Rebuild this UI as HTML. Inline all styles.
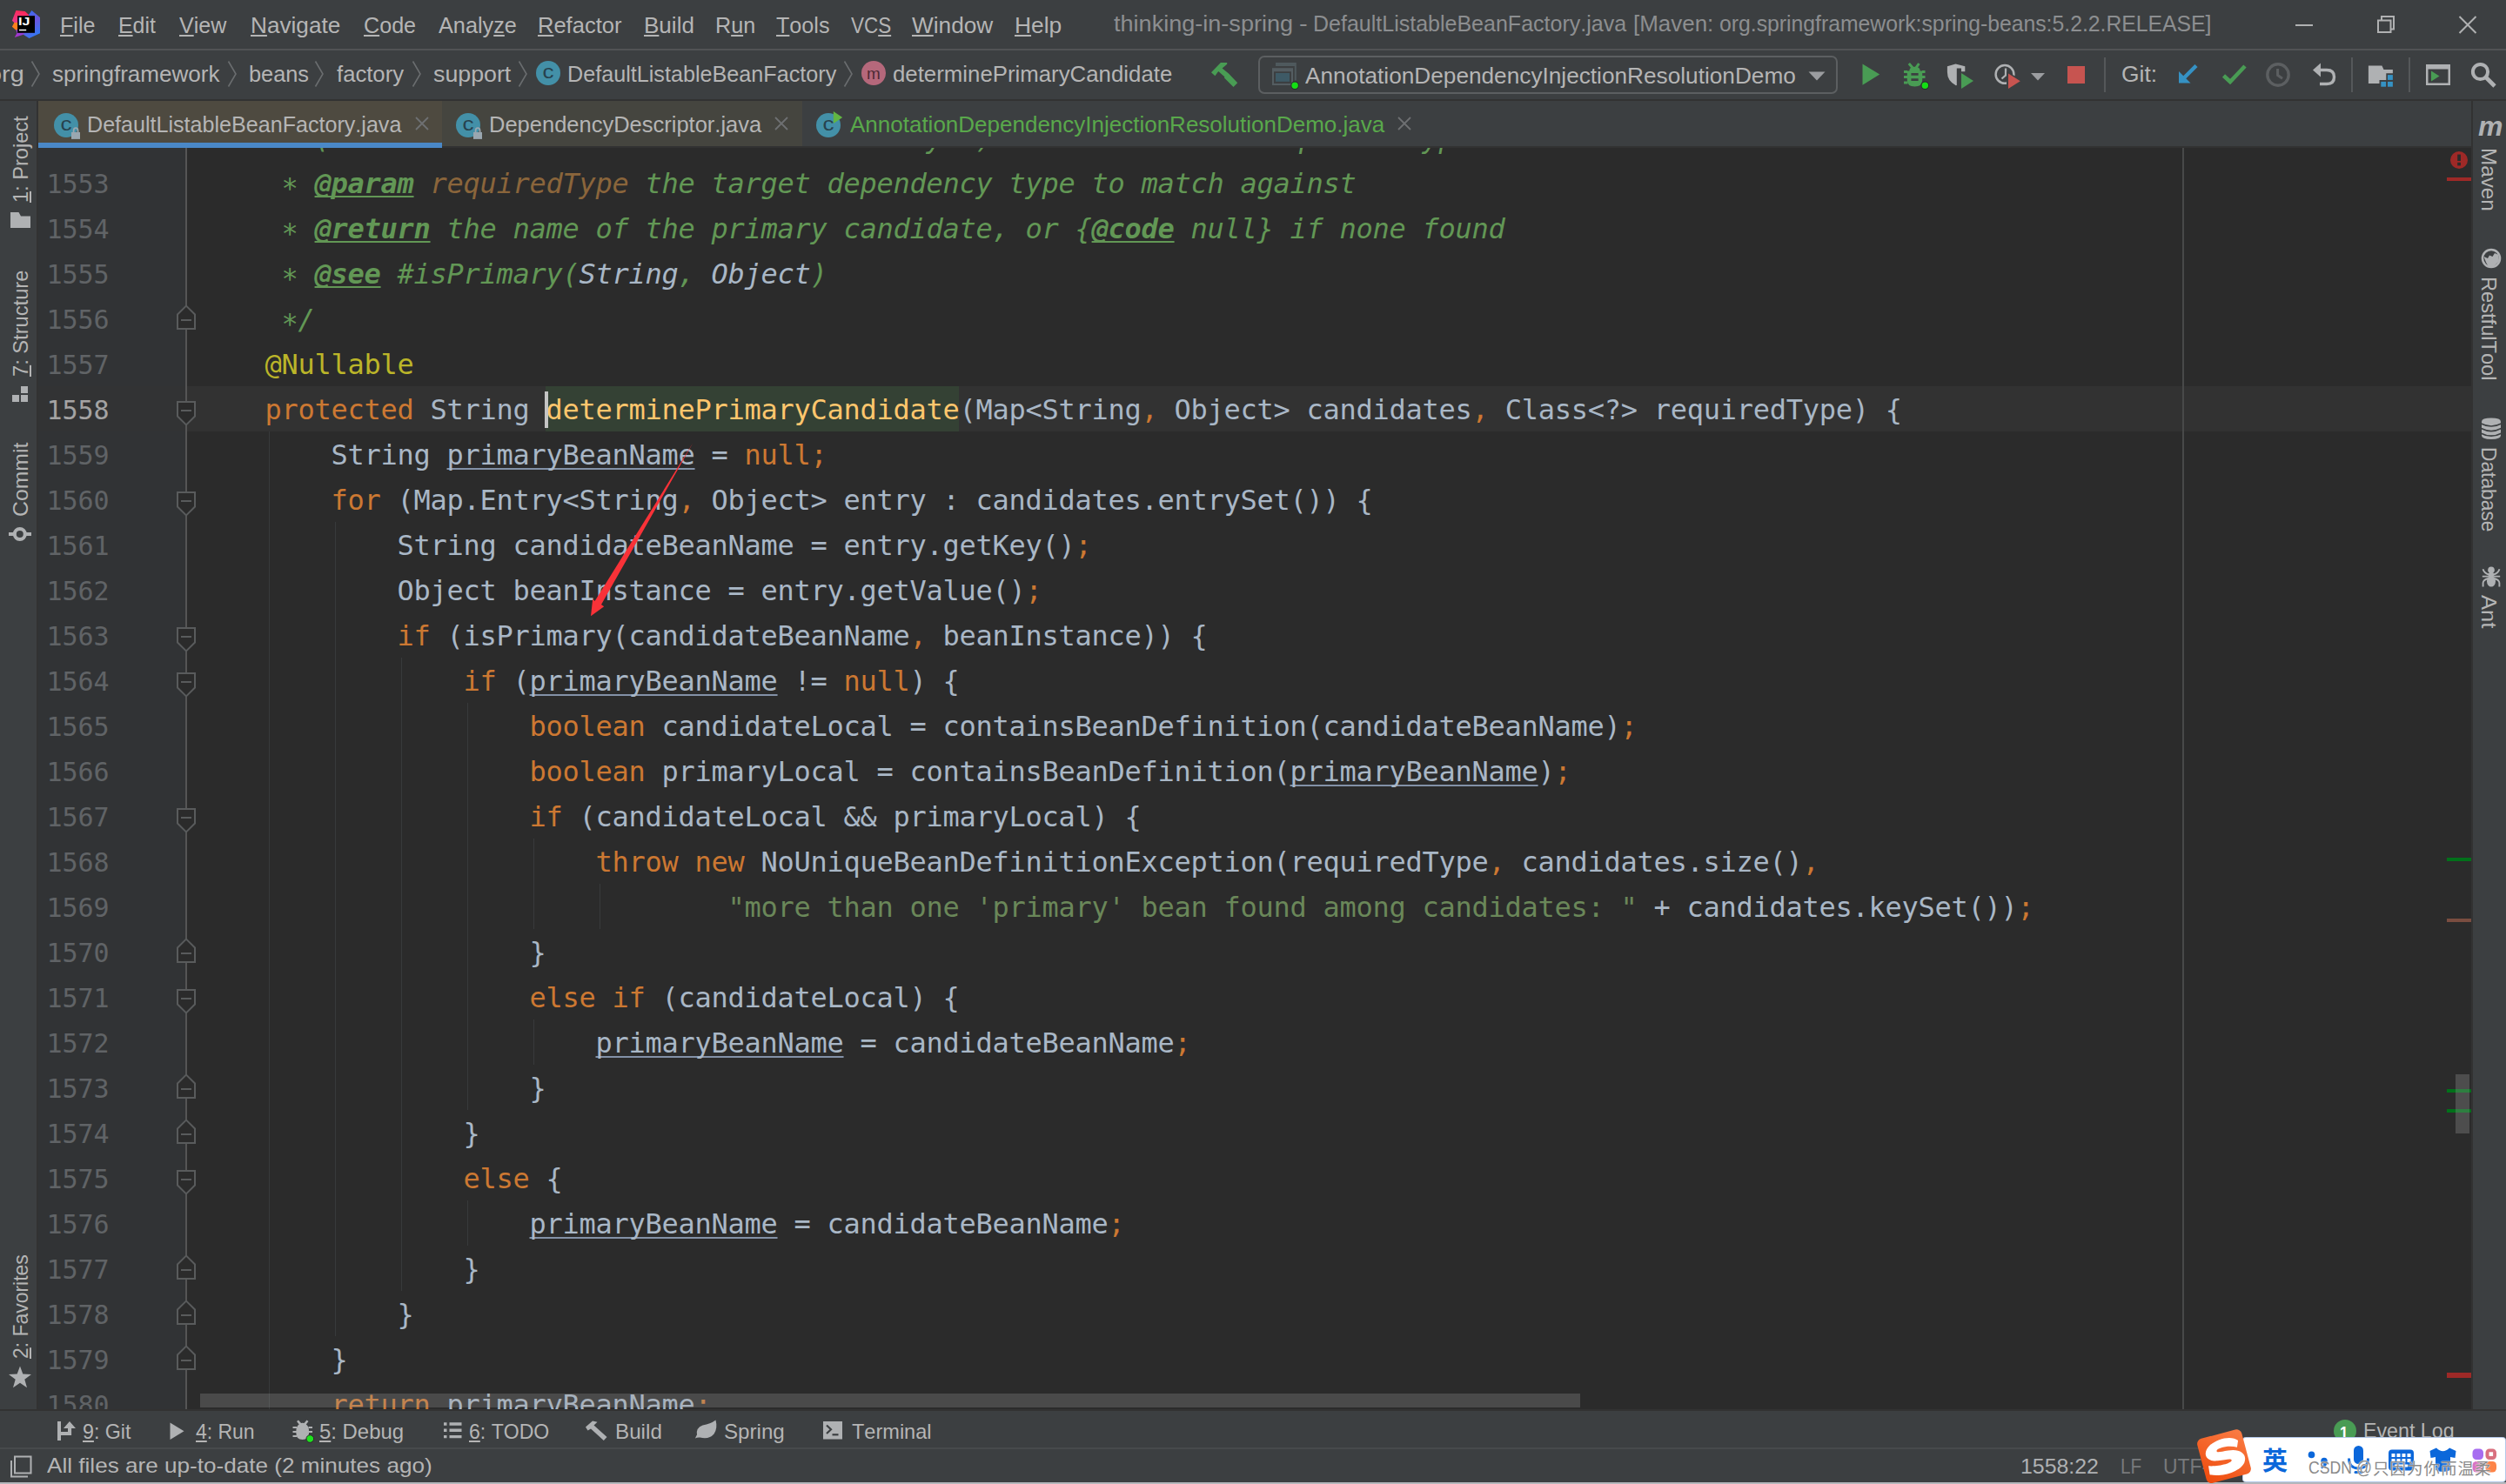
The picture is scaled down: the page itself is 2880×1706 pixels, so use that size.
<!DOCTYPE html>
<html><head><meta charset="utf-8"><title>thinking-in-spring - DefaultListableBeanFactory.java</title>
<style>
html,body{margin:0;padding:0}
html,body{width:2880px;height:1706px;background:#3c3f41}
#root{position:relative;width:2880px;height:1706px;overflow:hidden;background:#3c3f41;font-family:"Liberation Sans",sans-serif;font-kerning:none}
.t{position:absolute;white-space:pre;line-height:1em;font-family:"Liberation Sans",sans-serif;transform-origin:0 0}
.t u{text-decoration:underline;text-decoration-thickness:2px;text-underline-offset:2.2px}
#ed{position:absolute;left:44px;top:170px;width:2796px;height:1450px;background:#2b2b2b;overflow:hidden}
.ln{position:absolute;left:184.5px;height:52px;line-height:52px;white-space:pre;font-family:"DejaVu Sans Mono","Liberation Mono",monospace;font-size:32px;letter-spacing:-0.2656px;color:#a9b7c6}
.num{position:absolute;left:9.5px;height:52px;line-height:52px;white-space:pre;font-family:"DejaVu Sans Mono","Liberation Mono",monospace;font-size:30px;letter-spacing:-0.061px;color:#606366}
.k{color:#cc7832}.m{color:#ffc66d}.a{color:#bbb529}.s{color:#6a8759}
.d{color:#629755;font-style:italic}.dt{color:#629755;font-style:italic;font-weight:bold;text-decoration:underline;text-decoration-thickness:2px;text-underline-offset:2.6px;text-decoration-skip-ink:none}
.ast{position:relative;top:5px}.dp{color:#8a653b;font-style:italic}.dl{color:#a9b7c6;font-style:italic}
.v{text-decoration:underline;text-decoration-color:#8391a7;text-decoration-thickness:2px;text-underline-offset:3.5px;text-decoration-skip-ink:none}
</style></head><body><div id="root">
<div style="position:absolute;left:0px;top:56px;width:2880px;height:2px;background:#515355;"></div>
<div style="position:absolute;left:0px;top:114px;width:2880px;height:2px;background:#323232;"></div>
<div style="position:absolute;left:44px;top:168px;width:2796px;height:2px;background:#323232;"></div>
<div style="position:absolute;left:42px;top:116px;width:2px;height:1504px;background:#323232;"></div>
<div style="position:absolute;left:2840px;top:116px;width:2px;height:1504px;background:#323232;"></div>
<div style="position:absolute;left:0px;top:1620px;width:2880px;height:2px;background:#323232;"></div>
<div style="position:absolute;left:0px;top:1664px;width:2880px;height:1.6px;background:#474a4c;"></div>
<div style="position:absolute;left:0px;top:1704px;width:2880px;height:2px;background:#b4b7bb;"></div>
<div class="t " style="left:69.14px;top:16.29px;font-size:26px;transform:scaleX(0.9636);color:#b5b5b5;"><u>F</u>ile</div>
<div class="t " style="left:136.16px;top:16.29px;font-size:26px;transform:scaleX(0.9558);color:#b5b5b5;"><u>E</u>dit</div>
<div class="t " style="left:206.19px;top:16.29px;font-size:26px;transform:scaleX(0.9626);color:#b5b5b5;"><u>V</u>iew</div>
<div class="t " style="left:288.05px;top:16.29px;font-size:26px;transform:scaleX(1.0068);color:#b5b5b5;"><u>N</u>avigate</div>
<div class="t " style="left:418.02px;top:16.29px;font-size:26px;transform:scaleX(0.9668);color:#b5b5b5;"><u>C</u>ode</div>
<div class="t " style="left:504.25px;top:16.29px;font-size:26px;transform:scaleX(0.9716);color:#b5b5b5;">Analy<u>z</u>e</div>
<div class="t " style="left:617.81px;top:16.29px;font-size:26px;transform:scaleX(0.9812);color:#b5b5b5;"><u>R</u>efactor</div>
<div class="t " style="left:739.66px;top:16.29px;font-size:26px;transform:scaleX(1.0017);color:#b5b5b5;"><u>B</u>uild</div>
<div class="t " style="left:821.84px;top:16.29px;font-size:26px;transform:scaleX(0.9664);color:#b5b5b5;">R<u>u</u>n</div>
<div class="t " style="left:891.84px;top:16.29px;font-size:26px;transform:scaleX(0.9669);color:#b5b5b5;"><u>T</u>ools</div>
<div class="t " style="left:978.30px;top:16.29px;font-size:26px;transform:scaleX(0.8629);color:#b5b5b5;">VC<u>S</u></div>
<div class="t " style="left:1048.08px;top:16.29px;font-size:26px;transform:scaleX(1.0084);color:#b5b5b5;"><u>W</u>indow</div>
<div class="t " style="left:1166.24px;top:16.29px;font-size:26px;transform:scaleX(1.0150);color:#b5b5b5;"><u>H</u>elp</div>
<div class="t " style="left:1279.89px;top:13.79px;font-size:26px;transform:scaleX(1.0408);color:#8c8e90;">thinking-in-spring</div>
<div class="t " style="left:1492.91px;top:13.79px;font-size:26px;transform:scaleX(1.1185);color:#8c8e90;">-</div>
<div class="t " style="left:1508.95px;top:13.79px;font-size:26px;transform:scaleX(0.9619);color:#8c8e90;">DefaultListableBeanFactory.java</div>
<div class="t " style="left:1877.35px;top:13.79px;font-size:26px;transform:scaleX(0.9982);color:#8c8e90;">[Maven:</div>
<div class="t " style="left:1975.66px;top:13.79px;font-size:26px;transform:scaleX(0.9521);color:#8c8e90;">org.springframework:spring-beans:5.2.2.RELEASE]</div>
<svg style="position:absolute;left:13px;top:11px;" width="34" height="34" viewBox="0 0 34 34"><defs><linearGradient id="lgb" x1="0.3" y1="0" x2="0.7" y2="1"><stop offset="0" stop-color="#336ff0"/><stop offset=".45" stop-color="#6b55dd"/><stop offset="1" stop-color="#2b7cf6"/></linearGradient>
<linearGradient id="lgp" x1="0.6" y1="0" x2="0.2" y2="1"><stop offset="0" stop-color="#fe2857"/><stop offset="1" stop-color="#e63a8c"/></linearGradient>
<linearGradient id="lgm" x1="0" y1="1" x2="1" y2="0"><stop offset="0" stop-color="#b030c8"/><stop offset="1" stop-color="#7a4be0"/></linearGradient></defs>
<path d="M5.4 1 L15.7 1.9 L20 6 V8 H8 V15.1 H3.3 L0.9 12.7 Z" fill="url(#lgp)"/>
<path d="M3.3 15.1 H8 V22.5 L5.4 23.7 L0.9 19.7 Z" fill="#fc801d"/>
<path d="M20 6 L23.4 1 L33 9.1 V27.3 L20.5 33 L13.8 28.8 V26 H26 V8 H20 Z" fill="url(#lgb)"/>
<path d="M5.4 23.7 L8 22 V26 H15.7 L13.8 28.8 L3.8 31.9 L6.6 26.8 Z" fill="url(#lgm)"/>
<rect x="7.1" y="7.2" width="19.9" height="19.6" fill="#000"/>
<rect x="9" y="22.8" width="8.2" height="1.5" fill="#fff"/></svg>
<div class="t " style="left:20.82px;top:18.00px;font-size:13px;transform:scaleX(1.2440);color:#fff;font-weight:bold;">IJ</div>
<div style="position:absolute;left:2638px;top:28px;width:20px;height:2px;background:#b0b1b2;"></div>
<svg style="position:absolute;left:2730px;top:16px;" width="24" height="24" viewBox="0 0 24 24"><path d="M3 7.5 H17.5 V21 H3 Z M7 7 V3 H21 V17.5 H18" fill="none" stroke="#b0b1b2" stroke-width="2"/></svg>
<svg style="position:absolute;left:2824px;top:16px;" width="24" height="24" viewBox="0 0 24 24"><path d="M2.5 3 L21.5 22 M21.5 3 L2.5 22" fill="none" stroke="#b0b1b2" stroke-width="2"/></svg>
<div class="t " style="left:-13.81px;top:71.99px;font-size:26px;transform:scaleX(1.1089);color:#b5b5b5;">org</div>
<svg style="position:absolute;left:35px;top:69px;" width="12" height="32" viewBox="0 0 12 32"><path d="M1.5 1.5 L10 16 L1.5 30.5" fill="none" stroke="#6a6d6f" stroke-width="1.6"/></svg>
<svg style="position:absolute;left:261px;top:69px;" width="12" height="32" viewBox="0 0 12 32"><path d="M1.5 1.5 L10 16 L1.5 30.5" fill="none" stroke="#6a6d6f" stroke-width="1.6"/></svg>
<svg style="position:absolute;left:361px;top:69px;" width="12" height="32" viewBox="0 0 12 32"><path d="M1.5 1.5 L10 16 L1.5 30.5" fill="none" stroke="#6a6d6f" stroke-width="1.6"/></svg>
<svg style="position:absolute;left:473px;top:69px;" width="12" height="32" viewBox="0 0 12 32"><path d="M1.5 1.5 L10 16 L1.5 30.5" fill="none" stroke="#6a6d6f" stroke-width="1.6"/></svg>
<svg style="position:absolute;left:594.6px;top:69px;" width="12" height="32" viewBox="0 0 12 32"><path d="M1.5 1.5 L10 16 L1.5 30.5" fill="none" stroke="#6a6d6f" stroke-width="1.6"/></svg>
<svg style="position:absolute;left:969.4px;top:69px;" width="12" height="32" viewBox="0 0 12 32"><path d="M1.5 1.5 L10 16 L1.5 30.5" fill="none" stroke="#6a6d6f" stroke-width="1.6"/></svg>
<div class="t " style="left:59.78px;top:71.99px;font-size:26px;transform:scaleX(1.0017);color:#b5b5b5;">springframework</div>
<div class="t " style="left:285.67px;top:71.99px;font-size:26px;transform:scaleX(0.9733);color:#b5b5b5;">beans</div>
<div class="t " style="left:386.54px;top:71.99px;font-size:26px;transform:scaleX(0.9870);color:#b5b5b5;">factory</div>
<div class="t " style="left:497.76px;top:71.99px;font-size:26px;transform:scaleX(1.0290);color:#b5b5b5;">support</div>
<div style="position:absolute;left:615.9px;top:70.3px;width:28px;height:28px;border-radius:50%;background:#4390a8"></div>
<div class="t" style="left:615.9px;top:69.2px;width:28px;text-align:center;font-size:22.5px;color:#27424e;line-height:28px;transform:scaleX(1.16);transform-origin:50% 50%">c</div>
<div class="t " style="left:652.14px;top:71.99px;font-size:26px;transform:scaleX(0.9681);color:#b5b5b5;">DefaultListableBeanFactory</div>
<div style="position:absolute;left:990px;top:70.3px;width:28px;height:28px;border-radius:50%;background:#b5687b"></div>
<div class="t" style="left:990px;top:70.6px;width:28px;text-align:center;font-size:18px;color:#4d2a35;line-height:28px;transform:scaleX(1.05);transform-origin:50% 50%">m</div>
<div class="t " style="left:1025.92px;top:71.99px;font-size:26px;transform:scaleX(0.9924);color:#b5b5b5;">determinePrimaryCandidate</div>
<svg style="position:absolute;left:1392px;top:71px;" width="32" height="30" viewBox="0 0 32 30"><path d="M0 12.2 L10.9 1 H18.2 V2.7 L12.6 7.4 L20 13.6 L30.2 24.2 L25.5 29 L15 18.6 L15.3 17.3 L8.2 11 L4.4 16.2 Z" fill="#499c54"/></svg>
<div style="position:absolute;left:1446px;top:64px;width:666px;height:44px;border:2px solid #5c5f61;border-radius:7px;box-sizing:border-box"></div>
<svg style="position:absolute;left:1460px;top:71px;" width="34" height="32" viewBox="0 0 34 32"><path d="M6 1 H29.8 V21.4 H27.8 V5 H6 Z" fill="#4f595d"/><path d="M2 7.2 H26 V27 H2 Z M4 11.2 V25 H24 V11.2 Z" fill="#545d61" fill-rule="evenodd"/><rect x="6" y="13" width="16" height="9.8" fill="#3e5a66"/><circle cx="28.1" cy="27.3" r="4.3" fill="#14df14" stroke="#2a2c2d" stroke-width="1.1"/></svg>
<div class="t " style="left:1500.25px;top:73.79px;font-size:26px;transform:scaleX(1.0080);color:#b5b5b5;">AnnotationDependencyInjectionResolutionDemo</div>
<svg style="position:absolute;left:2078px;top:82px;" width="20" height="11" viewBox="0 0 20 11"><path d="M0.5 0.5 H19.5 L10 10.5 Z" fill="#9b9da0"/></svg>
<svg style="position:absolute;left:2138.5px;top:72.3px;" width="23" height="27" viewBox="0 0 23 27"><path d="M1.5 1.5 L21.2 13.6 L1.5 25.7 Z" fill="#499c54"/></svg>
<svg style="position:absolute;left:2186px;top:71px;" width="32" height="32" viewBox="0 0 32 32"><path d="M7.8 2 L13.6 8.8 M19.4 2 L14.6 8.8" stroke="#499c54" stroke-width="3" fill="none"/><path d="M8.3 10.5 Q8.3 5.8 14.5 5.8 Q20.7 5.8 20.7 10.5 H23.2 V21 Q23.2 28.5 14.5 28.5 Q5.8 28.5 5.8 21 V10.5 Z" fill="#499c54"/><path d="M2 11.5 H6 M2 17.5 H6 M2 24 H6.5 M23 11.5 H26.5 M23 17.5 H26.5" stroke="#499c54" stroke-width="3"/><path d="M10.4 14.3 H18.6 M10.4 20.6 H18.6" stroke="#3c3f41" stroke-width="2.7"/><circle cx="26.3" cy="27.3" r="4.3" fill="#14df14" stroke="#2a2c2d" stroke-width="1.1"/></svg>
<svg style="position:absolute;left:2236px;top:72px;" width="34" height="32" viewBox="0 0 34 32"><path d="M1.9 4.2 L11.5 1.6 L22.3 4.2 V10.3 H18 V6.5 L12.8 6.5 V26 L11.8 26.3 Q1.9 21 1.9 11 Z" fill="#afb1b3"/><path d="M18 11.9 L32 20.9 L18 29.9 Z" fill="#499c54"/></svg>
<svg style="position:absolute;left:2290px;top:71px;" width="34" height="33" viewBox="0 0 34 33"><circle cx="14" cy="14.4" r="10.4" fill="none" stroke="#afb1b3" stroke-width="2.5"/><path d="M15 7.5 V15.5 L10.5 19.5" fill="none" stroke="#afb1b3" stroke-width="2.3"/><path d="M16 11 V32 H32 V20 Z" fill="#3c3f41"/><path d="M18 13.4 L31.8 22.2 L18 31 Z" fill="#c75450"/></svg>
<svg style="position:absolute;left:2334px;top:84px;" width="16" height="9" viewBox="0 0 16 9"><path d="M0 0 H16 L8 8.5 Z" fill="#9b9da0"/></svg>
<div style="position:absolute;left:2376px;top:76px;width:20px;height:20px;background:#c75450;"></div>
<div style="position:absolute;left:2418px;top:66px;width:2px;height:40px;background:#55585a;"></div>
<div class="t " style="left:2437.57px;top:71.89px;font-size:26px;transform:scaleX(1.0145);color:#b5b5b5;">Git:</div>
<svg style="position:absolute;left:2502px;top:73px;" width="26" height="24" viewBox="0 0 26 24"><path d="M22 2.5 L8 16.5" stroke="#3592c4" stroke-width="4.4" fill="none"/><path d="M2 9 V22.5 H15.5 Z" fill="#3592c4"/></svg>
<svg style="position:absolute;left:2553px;top:73px;" width="30" height="24" viewBox="0 0 30 24"><path d="M2.5 14 L10 21 L27 3" stroke="#499c54" stroke-width="4.6" fill="none"/></svg>
<svg style="position:absolute;left:2603px;top:71px;" width="30" height="30" viewBox="0 0 30 30"><circle cx="15" cy="15" r="12.2" fill="none" stroke="#5c5f61" stroke-width="3.4"/><path d="M14.6 8 V15.5 L20 19.3" fill="none" stroke="#5c5f61" stroke-width="3"/></svg>
<svg style="position:absolute;left:2657px;top:71px;" width="29" height="28" viewBox="0 0 29 28"><path d="M10 1.5 V17.5 L1 9.5 Z" fill="#afb1b3"/><path d="M9 9.5 H17 Q25.5 9.5 25.5 17.5 Q25.5 25.5 17 25.5 H9" fill="none" stroke="#afb1b3" stroke-width="3.4"/></svg>
<div style="position:absolute;left:2702px;top:66px;width:2px;height:40px;background:#55585a;"></div>
<svg style="position:absolute;left:2721px;top:75px;" width="30" height="26" viewBox="0 0 30 26"><path d="M0.9 0.6 H16.4 L18.5 4.9 H28.9 V9.3 H21.3 V17.1 H13.5 V21.1 H0.9 Z" fill="#afb1b3"/><rect x="23" y="11.1" width="5.9" height="5.8" fill="#3592c4"/><rect x="15.3" y="18.9" width="5.8" height="5.8" fill="#3592c4"/><rect x="23" y="18.9" width="5.9" height="5.8" fill="#3592c4"/></svg>
<div style="position:absolute;left:2768px;top:66px;width:2px;height:40px;background:#55585a;"></div>
<svg style="position:absolute;left:2787px;top:73px;" width="30" height="26" viewBox="0 0 30 26"><path d="M1 1 H29 V25 H1 Z M3.5 6.5 V22.5 H26.5 V6.5 Z" fill="#afb1b3" fill-rule="evenodd"/><path d="M7 8.5 L16.5 14.5 L7 20.5 Z" fill="#499c54"/></svg>
<svg style="position:absolute;left:2839px;top:71px;" width="31" height="30" viewBox="0 0 31 30"><circle cx="11.5" cy="11.5" r="8.6" fill="none" stroke="#afb1b3" stroke-width="4"/><path d="M17.5 17.5 L28 28" stroke="#afb1b3" stroke-width="4.6"/></svg>
<div style="position:absolute;left:44px;top:116px;width:464px;height:48px;background:#4e4a40;"></div>
<div style="position:absolute;left:44px;top:164px;width:464px;height:6px;background:#4a88c7;"></div>
<div style="position:absolute;left:508px;top:116px;width:414px;height:52px;background:#45453f;"></div>
<div style="position:absolute;left:61.95px;top:129.8px;width:28.2px;height:28.2px;border-radius:50%;background:#4390a8"></div>
<div class="t" style="left:61.95px;top:128.7px;width:28.2px;text-align:center;font-size:22.5px;color:#27424e;line-height:28.2px;transform:scaleX(1.16);transform-origin:50% 50%">c</div>
<svg style="position:absolute;left:82px;top:145.9px;" width="10.2" height="13.9" viewBox="0 0 11 15"><path d="M2.8 7 V4.5 Q2.8 1.2 5.5 1.2 Q8.2 1.2 8.2 4.5 V7" fill="none" stroke="#9aa7b0" stroke-width="1.9"/><rect x="0" y="6.5" width="11" height="8.5" fill="#9aa7b0"/></svg>
<div class="t " style="left:99.94px;top:130.29px;font-size:26px;transform:scaleX(0.9654);color:#b5b5b5;">DefaultListableBeanFactory.java</div>
<svg style="position:absolute;left:476.5px;top:134px;" width="16" height="16" viewBox="0 0 16 16"><path d="M1 1 L15 15 M15 1 L1 15" stroke="#6e7072" stroke-width="1.8" fill="none"/></svg>
<div style="position:absolute;left:523.9px;top:129.8px;width:28.2px;height:28.2px;border-radius:50%;background:#4390a8"></div>
<div class="t" style="left:523.9px;top:128.7px;width:28.2px;text-align:center;font-size:22.5px;color:#27424e;line-height:28.2px;transform:scaleX(1.16);transform-origin:50% 50%">c</div>
<svg style="position:absolute;left:544px;top:146.2px;" width="10.2" height="13.9" viewBox="0 0 11 15"><path d="M2.8 7 V4.5 Q2.8 1.2 5.5 1.2 Q8.2 1.2 8.2 4.5 V7" fill="none" stroke="#9aa7b0" stroke-width="1.9"/><rect x="0" y="6.5" width="11" height="8.5" fill="#9aa7b0"/></svg>
<div class="t " style="left:562.11px;top:130.29px;font-size:26px;transform:scaleX(0.9806);color:#b5b5b5;">DependencyDescriptor.java</div>
<svg style="position:absolute;left:890px;top:134px;" width="16" height="16" viewBox="0 0 16 16"><path d="M1 1 L15 15 M15 1 L1 15" stroke="#6e7072" stroke-width="1.8" fill="none"/></svg>
<div style="position:absolute;left:938px;top:129.8px;width:28.2px;height:28.2px;border-radius:50%;background:#4390a8"></div>
<div class="t" style="left:938px;top:128.7px;width:28.2px;text-align:center;font-size:22.5px;color:#27424e;line-height:28.2px;transform:scaleX(1.16);transform-origin:50% 50%">c</div>
<svg style="position:absolute;left:957px;top:127px;" width="12" height="16" viewBox="0 0 12 16"><path d="M0.8 1 L11.2 7.9 L0.8 14.9 Z" fill="#62b543"/></svg>
<div class="t " style="left:976.55px;top:130.29px;font-size:26px;transform:scaleX(0.9999);color:#59a84b;">AnnotationDependencyInjectionResolutionDemo.java</div>
<svg style="position:absolute;left:1606px;top:134px;" width="16" height="16" viewBox="0 0 16 16"><path d="M1 1 L15 15 M15 1 L1 15" stroke="#6e7072" stroke-width="1.8" fill="none"/></svg>
<div class="t" style="left:12.18px;top:233.00px;transform:rotate(-90deg) scaleX(0.9821);font-size:24px;color:#b5b5b5;"><u>1</u>: Project</div>
<svg style="position:absolute;left:11.5px;top:243.5px;" width="23" height="18.5" viewBox="0 0 23 18.5"><path d="M0 0 H9.5 L12 4.5 H23 V18.5 H0 Z" fill="#afb1b3"/></svg>
<div class="t" style="left:12.18px;top:432.51px;transform:rotate(-90deg) scaleX(0.9864);font-size:24px;color:#b5b5b5;"><u>7</u>: Structure</div>
<div style="position:absolute;left:24px;top:444px;width:8px;height:7.6px;background:#afb1b3;"></div>
<div style="position:absolute;left:14px;top:454.3px;width:8px;height:7.7px;background:#afb1b3;"></div>
<div style="position:absolute;left:24px;top:454.3px;width:8px;height:7.7px;background:#afb1b3;"></div>
<div class="t" style="left:12.18px;top:594.06px;transform:rotate(-90deg) scaleX(1.0336);font-size:24px;color:#b5b5b5;">Commit</div>
<svg style="position:absolute;left:9px;top:604px;" width="28" height="20" viewBox="0 0 28 20"><path d="M1 10 H27" stroke="#afb1b3" stroke-width="4"/><circle cx="13.8" cy="10" r="6" fill="#3c3f41" stroke="#afb1b3" stroke-width="4"/></svg>
<div class="t" style="left:12.18px;top:1561.95px;transform:rotate(-90deg) scaleX(0.9554);font-size:24px;color:#b5b5b5;"><u>2</u>: Favorites</div>
<svg style="position:absolute;left:9px;top:1570px;" width="28" height="26" viewBox="0 0 28 26"><path d="M14 0.5 L17.3 9.6 L27 9.9 L19.3 15.8 L22 25.2 L14 19.7 L6 25.2 L8.7 15.8 L1 9.9 L10.7 9.6 Z" fill="#afb1b3"/></svg>
<div class="t" style="left:2848px;top:129px;font-size:32px;font-weight:bold;font-style:italic;color:#afb1b3;letter-spacing:0">m</div>
<div class="t" style="left:2872.12px;top:169.91px;transform:rotate(90deg) scaleX(1.0116);font-size:24px;color:#b5b5b5;">Maven</div>
<svg style="position:absolute;left:2851px;top:285px;" width="24" height="24" viewBox="0 0 24 24"><circle cx="12" cy="12" r="10" fill="#3c3f41" stroke="#afb1b3" stroke-width="2.6"/><path d="M3.5 10 L8 12 L10 8.5 L13.5 10 L16 6 L20.5 8 L21 15 L15 21.5 L8.5 21 L6 16.5 Z" fill="#afb1b3"/></svg>
<div class="t" style="left:2872.12px;top:318.06px;transform:rotate(90deg) scaleX(0.9846);font-size:24px;color:#b5b5b5;">RestfulTool</div>
<svg style="position:absolute;left:2851px;top:479.5px;" width="24" height="26" viewBox="0 0 24 26"><path d="M1 4.8 Q1 0.6 12 0.6 Q23 0.6 23 4.8 V20.6 Q23 25 12 25 Q1 25 1 20.6 Z" fill="#afb1b3"/><path d="M0.5 7 Q12 13 23.5 7 M0.5 12.6 Q12 18.6 23.5 12.6 M0.5 18.2 Q12 24.2 23.5 18.2" stroke="#3c3f41" stroke-width="1.7" fill="none"/></svg>
<div class="t" style="left:2872.12px;top:514.13px;transform:rotate(90deg) scaleX(0.9488);font-size:24px;color:#b5b5b5;">Database</div>
<svg style="position:absolute;left:2851px;top:650.5px;" width="24" height="25" viewBox="0 0 24 25"><circle cx="12" cy="4.2" r="3.8" fill="#afb1b3"/><ellipse cx="12" cy="10" rx="3.2" ry="3.2" fill="#afb1b3"/><ellipse cx="12" cy="17.2" rx="5" ry="6.3" fill="#afb1b3"/><path d="M9.5 9.5 Q4 8 2.5 3.2 M14.5 9.5 Q20 8 21.5 3.2 M9 11.6 H1.8 M15 11.6 H22.2 M8.5 14 Q3 15.5 2.6 19 V23.6 M15.5 14 Q21 15.5 21.4 19 V23.6" stroke="#afb1b3" stroke-width="1.9" fill="none"/></svg>
<div class="t" style="left:2872.12px;top:683.95px;transform:rotate(90deg) scaleX(1.0670);font-size:24px;color:#b5b5b5;">Ant</div>
<div id="ed"><div style="position:absolute;left:0px;top:0px;width:169px;height:1450px;background:#313335;"></div>
<div style="position:absolute;left:0px;top:274px;width:169px;height:52px;background:#323334;"></div>
<div style="position:absolute;left:171px;top:274px;width:2625px;height:52px;background:#323232;"></div>
<div style="position:absolute;left:583px;top:274px;width:475.2px;height:52px;background:#344134;"></div>
<div style="position:absolute;left:2464px;top:0px;width:2px;height:1450px;background:#484949;"></div>
<div style="position:absolute;left:264.5px;top:326px;width:1.6px;height:1196px;background:#383a3b;"></div>
<div style="position:absolute;left:340.5px;top:430px;width:1.6px;height:936px;background:#383a3b;"></div>
<div style="position:absolute;left:416.5px;top:586px;width:1.6px;height:728px;background:#383a3b;"></div>
<div style="position:absolute;left:492.5px;top:638px;width:1.6px;height:468px;background:#383a3b;"></div>
<div style="position:absolute;left:492.5px;top:1210px;width:1.6px;height:52px;background:#383a3b;"></div>
<div style="position:absolute;left:568.5px;top:794px;width:1.6px;height:104px;background:#383a3b;"></div>
<div style="position:absolute;left:568.5px;top:1002px;width:1.6px;height:52px;background:#383a3b;"></div>
<div style="position:absolute;left:644.5px;top:846px;width:1.6px;height:52px;background:#383a3b;"></div>
<div style="position:absolute;left:169px;top:0px;width:2px;height:1450px;background:#555555;"></div>
<div class="ln" style="top:-37px"><span class="d">     </span><span class="d ast">*</span><span class="d"> (or candidate classes if not created yet) that match the required type</span></div>
<div class="ln" style="top:15px"><span class="d">     </span><span class="d ast">*</span><span class="d"> </span><span class="dt">@param</span><span class="d"> </span><span class="dp">requiredType</span><span class="d"> the target dependency type to match against</span></div>
<div class="ln" style="top:67px"><span class="d">     </span><span class="d ast">*</span><span class="d"> </span><span class="dt">@return</span><span class="d"> the name of the primary candidate, or {</span><span class="dt">@code</span><span class="d"> null} if none found</span></div>
<div class="ln" style="top:119px"><span class="d">     </span><span class="d ast">*</span><span class="d"> </span><span class="dt">@see</span><span class="d"> #isPrimary(</span><span class="dl">String</span><span class="d">, </span><span class="dl">Object</span><span class="d">)</span></div>
<div class="ln" style="top:171px"><span class="d">     </span><span class="d ast">*</span><span class="d">/</span></div>
<div class="ln" style="top:223px">    <span class="a">@Nullable</span></div>
<div class="ln" style="top:275px">    <span class="k">protected</span> String <span class="m">determinePrimaryCandidate</span>(Map&lt;String<span class="k">,</span> Object&gt; candidates<span class="k">,</span> Class&lt;?&gt; requiredType) {</div>
<div class="ln" style="top:327px">        String <span class="v">primaryBeanName</span> = <span class="k">null;</span></div>
<div class="ln" style="top:379px">        <span class="k">for</span> (Map.Entry&lt;String<span class="k">,</span> Object&gt; entry : candidates.entrySet()) {</div>
<div class="ln" style="top:431px">            String candidateBeanName = entry.getKey()<span class="k">;</span></div>
<div class="ln" style="top:483px">            Object beanInstance = entry.getValue()<span class="k">;</span></div>
<div class="ln" style="top:535px">            <span class="k">if</span> (isPrimary(candidateBeanName<span class="k">,</span> beanInstance)) {</div>
<div class="ln" style="top:587px">                <span class="k">if</span> (<span class="v">primaryBeanName</span> != <span class="k">null</span>) {</div>
<div class="ln" style="top:639px">                    <span class="k">boolean</span> candidateLocal = containsBeanDefinition(candidateBeanName)<span class="k">;</span></div>
<div class="ln" style="top:691px">                    <span class="k">boolean</span> primaryLocal = containsBeanDefinition(<span class="v">primaryBeanName</span>)<span class="k">;</span></div>
<div class="ln" style="top:743px">                    <span class="k">if</span> (candidateLocal &amp;&amp; primaryLocal) {</div>
<div class="ln" style="top:795px">                        <span class="k">throw new</span> NoUniqueBeanDefinitionException(requiredType<span class="k">,</span> candidates.size()<span class="k">,</span></div>
<div class="ln" style="top:847px">                                <span class="s">&quot;more than one &#x27;primary&#x27; bean found among candidates: &quot;</span> + candidates.keySet())<span class="k">;</span></div>
<div class="ln" style="top:899px">                    }</div>
<div class="ln" style="top:951px">                    <span class="k">else if</span> (candidateLocal) {</div>
<div class="ln" style="top:1003px">                        <span class="v">primaryBeanName</span> = candidateBeanName<span class="k">;</span></div>
<div class="ln" style="top:1055px">                    }</div>
<div class="ln" style="top:1107px">                }</div>
<div class="ln" style="top:1159px">                <span class="k">else</span> {</div>
<div class="ln" style="top:1211px">                    <span class="v">primaryBeanName</span> = candidateBeanName<span class="k">;</span></div>
<div class="ln" style="top:1263px">                }</div>
<div class="ln" style="top:1315px">            }</div>
<div class="ln" style="top:1367px">        }</div>
<div class="ln" style="top:1419px">        <span class="k">return</span> <span class="v">primaryBeanName</span><span class="k">;</span></div>
<div class="num" style="top:15.8px">1553</div>
<div class="num" style="top:67.8px">1554</div>
<div class="num" style="top:119.8px">1555</div>
<div class="num" style="top:171.8px">1556</div>
<div class="num" style="top:223.8px">1557</div>
<div class="num" style="top:275.8px;color:#a4a3a3">1558</div>
<div class="num" style="top:327.8px">1559</div>
<div class="num" style="top:379.8px">1560</div>
<div class="num" style="top:431.8px">1561</div>
<div class="num" style="top:483.8px">1562</div>
<div class="num" style="top:535.8px">1563</div>
<div class="num" style="top:587.8px">1564</div>
<div class="num" style="top:639.8px">1565</div>
<div class="num" style="top:691.8px">1566</div>
<div class="num" style="top:743.8px">1567</div>
<div class="num" style="top:795.8px">1568</div>
<div class="num" style="top:847.8px">1569</div>
<div class="num" style="top:899.8px">1570</div>
<div class="num" style="top:951.8px">1571</div>
<div class="num" style="top:1003.8px">1572</div>
<div class="num" style="top:1055.8px">1573</div>
<div class="num" style="top:1107.8px">1574</div>
<div class="num" style="top:1159.8px">1575</div>
<div class="num" style="top:1211.8px">1576</div>
<div class="num" style="top:1263.8px">1577</div>
<div class="num" style="top:1315.8px">1578</div>
<div class="num" style="top:1367.8px">1579</div>
<div class="num" style="top:1419.8px">1580</div>
<div style="position:absolute;left:582px;top:280px;width:4px;height:42px;background:#c4c4c4;"></div>
<svg style="position:absolute;left:157px;top:179.6px" width="26" height="32" viewBox="0 0 26 32"><path d="M3 11.5 L13 1.6 L23 11.5 V28 H3 Z" fill="#2b2b2b" stroke="#595b5c" stroke-width="2"/><rect x="7" y="17" width="12" height="2" fill="#595b5c"/></svg>
<svg style="position:absolute;left:157px;top:907.6px" width="26" height="32" viewBox="0 0 26 32"><path d="M3 11.5 L13 1.6 L23 11.5 V28 H3 Z" fill="#2b2b2b" stroke="#595b5c" stroke-width="2"/><rect x="7" y="17" width="12" height="2" fill="#595b5c"/></svg>
<svg style="position:absolute;left:157px;top:1063.6px" width="26" height="32" viewBox="0 0 26 32"><path d="M3 11.5 L13 1.6 L23 11.5 V28 H3 Z" fill="#2b2b2b" stroke="#595b5c" stroke-width="2"/><rect x="7" y="17" width="12" height="2" fill="#595b5c"/></svg>
<svg style="position:absolute;left:157px;top:1115.6px" width="26" height="32" viewBox="0 0 26 32"><path d="M3 11.5 L13 1.6 L23 11.5 V28 H3 Z" fill="#2b2b2b" stroke="#595b5c" stroke-width="2"/><rect x="7" y="17" width="12" height="2" fill="#595b5c"/></svg>
<svg style="position:absolute;left:157px;top:1271.6px" width="26" height="32" viewBox="0 0 26 32"><path d="M3 11.5 L13 1.6 L23 11.5 V28 H3 Z" fill="#2b2b2b" stroke="#595b5c" stroke-width="2"/><rect x="7" y="17" width="12" height="2" fill="#595b5c"/></svg>
<svg style="position:absolute;left:157px;top:1323.6px" width="26" height="32" viewBox="0 0 26 32"><path d="M3 11.5 L13 1.6 L23 11.5 V28 H3 Z" fill="#2b2b2b" stroke="#595b5c" stroke-width="2"/><rect x="7" y="17" width="12" height="2" fill="#595b5c"/></svg>
<svg style="position:absolute;left:157px;top:1375.6px" width="26" height="32" viewBox="0 0 26 32"><path d="M3 11.5 L13 1.6 L23 11.5 V28 H3 Z" fill="#2b2b2b" stroke="#595b5c" stroke-width="2"/><rect x="7" y="17" width="12" height="2" fill="#595b5c"/></svg>
<svg style="position:absolute;left:157px;top:290px" width="26" height="32" viewBox="0 0 26 32"><path d="M3 2 H23 V18.5 L13 28.4 L3 18.5 Z" fill="#2b2b2b" stroke="#595b5c" stroke-width="2"/><rect x="7" y="11" width="12" height="2" fill="#595b5c"/></svg>
<svg style="position:absolute;left:157px;top:394px" width="26" height="32" viewBox="0 0 26 32"><path d="M3 2 H23 V18.5 L13 28.4 L3 18.5 Z" fill="#2b2b2b" stroke="#595b5c" stroke-width="2"/><rect x="7" y="11" width="12" height="2" fill="#595b5c"/></svg>
<svg style="position:absolute;left:157px;top:550px" width="26" height="32" viewBox="0 0 26 32"><path d="M3 2 H23 V18.5 L13 28.4 L3 18.5 Z" fill="#2b2b2b" stroke="#595b5c" stroke-width="2"/><rect x="7" y="11" width="12" height="2" fill="#595b5c"/></svg>
<svg style="position:absolute;left:157px;top:602px" width="26" height="32" viewBox="0 0 26 32"><path d="M3 2 H23 V18.5 L13 28.4 L3 18.5 Z" fill="#2b2b2b" stroke="#595b5c" stroke-width="2"/><rect x="7" y="11" width="12" height="2" fill="#595b5c"/></svg>
<svg style="position:absolute;left:157px;top:758px" width="26" height="32" viewBox="0 0 26 32"><path d="M3 2 H23 V18.5 L13 28.4 L3 18.5 Z" fill="#2b2b2b" stroke="#595b5c" stroke-width="2"/><rect x="7" y="11" width="12" height="2" fill="#595b5c"/></svg>
<svg style="position:absolute;left:157px;top:966px" width="26" height="32" viewBox="0 0 26 32"><path d="M3 2 H23 V18.5 L13 28.4 L3 18.5 Z" fill="#2b2b2b" stroke="#595b5c" stroke-width="2"/><rect x="7" y="11" width="12" height="2" fill="#595b5c"/></svg>
<svg style="position:absolute;left:157px;top:1174px" width="26" height="32" viewBox="0 0 26 32"><path d="M3 2 H23 V18.5 L13 28.4 L3 18.5 Z" fill="#2b2b2b" stroke="#595b5c" stroke-width="2"/><rect x="7" y="11" width="12" height="2" fill="#595b5c"/></svg>
<svg style="position:absolute;left:2771.3px;top:3px" width="22" height="22" viewBox="0 0 22 22"><circle cx="11" cy="11" r="10" fill="#9e2927"/><rect x="9.2" y="4.6" width="3.8" height="7.4" fill="#2b2b2b"/><rect x="9.2" y="13.8" width="3.8" height="3.6" fill="#2b2b2b"/></svg>
<div style="position:absolute;left:2768px;top:34px;width:28px;height:4px;background:#9e2927;"></div>
<div style="position:absolute;left:2768px;top:816px;width:28px;height:4px;background:#00701a;"></div>
<div style="position:absolute;left:2768px;top:886px;width:28px;height:4px;background:#7a4d40;"></div>
<div style="position:absolute;left:2768px;top:1082px;width:28px;height:4px;background:#00701a;"></div>
<div style="position:absolute;left:2768px;top:1104.5px;width:28px;height:4px;background:#00701a;"></div>
<div style="position:absolute;left:2778px;top:1064.5px;width:16px;height:68px;background:rgba(166,166,166,0.28);"></div>
<div style="position:absolute;left:2768px;top:1408px;width:28px;height:6px;background:#9e2927;"></div>
<div style="position:absolute;left:186px;top:1432px;width:1586px;height:16px;background:rgba(166,166,166,0.26);"></div>
<svg style="position:absolute;left:626px;top:330px" width="140" height="220" viewBox="670 500 140 220"><path d="M796.3 509.3 L691 695 L694.2 697.2 L679 708.2 L681.2 688.6 L683.6 691 Z" fill="#f93238"/></svg></div>
<svg style="position:absolute;left:64px;top:1633px;" width="24" height="24" viewBox="0 0 24 24"><path d="M2 1.1 H6 V23.1 H2 Z M6 13 H14 V8.9 H9 L15.95 1.1 L22.95 8.9 H18.1 V17 H6 Z" fill="#afb1b3"/></svg>
<div class="t " style="left:95.41px;top:1633.88px;font-size:24px;transform:scaleX(0.9670);color:#b5b5b5;"><u>9</u>: Git</div>
<svg style="position:absolute;left:195px;top:1634.5px;" width="18" height="21" viewBox="0 0 18 21"><path d="M0.5 0.5 L16.5 10.3 L0.5 20 Z" fill="#afb1b3"/></svg>
<div class="t " style="left:225.47px;top:1633.88px;font-size:24px;transform:scaleX(0.9562);color:#b5b5b5;"><u>4</u>: Run</div>
<svg style="position:absolute;left:335px;top:1631px;" width="28" height="28" viewBox="0 0 28 28"><path d="M6 3 L8 1.5 L11 5 Q12.5 4.5 14.5 5 L17.5 1.5 L19.5 3 L16.8 6.6 Q20 9 20 14 V17 Q20 24 12.7 24 Q5.4 24 5.4 17 V14 Q5.4 9 8.7 6.6 Z" fill="#afb1b3"/><path d="M1.5 10 H6 M1.5 15 H6 M1.5 20 H6 M19.5 10 H24 M19.5 15 H24" stroke="#afb1b3" stroke-width="2.2"/><circle cx="21.3" cy="23" r="4.3" fill="#1ee11e" stroke="#2b2b2b" stroke-width="1"/></svg>
<div class="t " style="left:367.24px;top:1633.88px;font-size:24px;transform:scaleX(0.9958);color:#b5b5b5;"><u>5</u>: Debug</div>
<svg style="position:absolute;left:510px;top:1635px;" width="21" height="19" viewBox="0 0 21 19"><path d="M0 2 H3.5 M0 9.3 H3.5 M0 16.6 H3.5" stroke="#afb1b3" stroke-width="3.4"/><path d="M6.5 2 H20.5 M6.5 9.3 H20.5 M6.5 16.6 H20.5" stroke="#afb1b3" stroke-width="3.4"/></svg>
<div class="t " style="left:538.83px;top:1633.88px;font-size:24px;transform:scaleX(0.9611);color:#b5b5b5;"><u>6</u>: TODO</div>
<svg style="position:absolute;left:672px;top:1632px;" width="27" height="25" viewBox="0 0 27 25"><path d="M1 8.5 L9 1.5 L14.5 2.8 L10.5 6.5 L25.5 20 L21.8 24 L7 10.5 L3.5 12.5 Z" fill="#afb1b3"/></svg>
<div class="t " style="left:706.51px;top:1633.88px;font-size:24px;transform:scaleX(1.0090);color:#b5b5b5;">Build</div>
<svg style="position:absolute;left:798px;top:1632px;" width="27" height="23" viewBox="0 0 27 23"><path d="M24.5 0.5 Q27 10 22.5 16.5 Q17 23 6.5 20.5 Q3.5 20 1 21.5 Q2 18.5 3 17.5 Q1.5 9.5 9.5 6.5 Q18.5 5 24.5 0.5 Z" fill="#afb1b3"/></svg>
<div class="t " style="left:831.80px;top:1633.88px;font-size:24px;transform:scaleX(1.0054);color:#b5b5b5;">Spring</div>
<svg style="position:absolute;left:946px;top:1634px;" width="22" height="21" viewBox="0 0 22 21"><rect x="0" y="0" width="22" height="20.5" fill="#afb1b3"/><path d="M4 4.5 L9 9.3 L4 14" fill="none" stroke="#3c3f41" stroke-width="2.2"/><path d="M10.5 15.3 H17.5" stroke="#3c3f41" stroke-width="2.2"/></svg>
<div class="t " style="left:978.67px;top:1633.88px;font-size:24px;transform:scaleX(0.9802);color:#b5b5b5;">Terminal</div>
<div style="position:absolute;left:2682px;top:1631.7px;width:26px;height:26px;border-radius:50%;background:#499c54"></div>
<div class="t " style="left:2688.72px;top:1635.82px;font-size:21px;transform:scaleX(0.8187);color:#fff;font-weight:bold;">1</div>
<div class="t " style="left:2715.89px;top:1633.48px;font-size:24px;transform:scaleX(0.9678);color:#b5b5b5;">Event Log</div>
<svg style="position:absolute;left:11px;top:1673px;" width="26" height="26" viewBox="0 0 26 26"><path d="M6 1.5 H24.5 V20.5 H6 Z" fill="none" stroke="#afb1b3" stroke-width="2"/><path d="M2 6 V24.5 H21" fill="none" stroke="#afb1b3" stroke-width="2"/></svg>
<div class="t " style="left:54.35px;top:1672.88px;font-size:24px;transform:scaleX(1.0880);color:#b5b5b5;">All files are up-to-date (2 minutes ago)</div>
<div class="t " style="left:2322.30px;top:1673.88px;font-size:24px;transform:scaleX(1.0368);color:#afb1b3;">1558:22</div>
<div class="t " style="left:2436.60px;top:1673.88px;font-size:24px;transform:scaleX(0.8653);color:#787a7c;">LF</div>
<div class="t " style="left:2486.24px;top:1673.88px;font-size:24px;transform:scaleX(0.9524);color:#787a7c;">UTF-8</div>
<div style="position:absolute;left:2577px;top:1652.4px;width:303px;height:51.2px;background:#fff;border:1.5px solid #b4c9ea;border-radius:3.5px;box-sizing:border-box"></div>
<svg style="position:absolute;left:2518px;top:1638px" width="76" height="70" viewBox="0 0 76 70">
<defs><linearGradient id="sg" x1="0" y1="1" x2="1" y2="0"><stop offset="0" stop-color="#ee4a0c"/><stop offset="1" stop-color="#fa7d45"/></linearGradient></defs>
<g transform="translate(38,36.2) rotate(-14.8) scale(1.035)"><rect x="-25.5" y="-25.5" width="51" height="51" rx="6" fill="url(#sg)"/>
<path d="M19.5 -13 C14 -21 -3 -21 -13 -15.5 C-23 -9 -21 1 -8 3 C0 4.2 7 4 7 6.2 C7 9.5 -7 10 -19.5 6 L-20.5 15.5 C-8 22 13 21 20 12.5 C26 4 19 -4 6 -5 C-2 -5.8 -7 -5.6 -6.5 -7.8 C-5.5 -11 8 -11 16.5 -6 Z" fill="#fff"/></g></svg>
<div class="t" style="left:2600px;top:1666.2px;font-size:29px;font-weight:bold;color:#0b67da;font-family:'Liberation Sans','Noto Sans CJK SC',sans-serif;line-height:1em">英</div>
<svg style="position:absolute;left:2648px;top:1664px;" width="32" height="30" viewBox="0 0 32 30"><circle cx="8.5" cy="8.4" r="3.8" fill="#0b67da"/><path d="M23 11.8 Q26.8 11.8 26.8 16 Q26.8 21.5 20.5 24.5 L19 22.6 Q22 21 22.4 19.2 Q19.3 18.8 19.3 15.5 Q19.3 11.8 23 11.8 Z" fill="#0b67da"/></svg>
<svg style="position:absolute;left:2697px;top:1661px;" width="28" height="35" viewBox="0 0 28 35"><rect x="8" y="1" width="11" height="21" rx="5.5" fill="#0b67da"/><path d="M2.5 15.5 Q2.5 27 13.5 27 Q24.5 27 24.5 15.5" fill="none" stroke="#0b67da" stroke-width="2.8"/><rect x="8.5" y="30" width="10" height="3" rx="1.5" fill="#0b67da"/></svg>
<svg style="position:absolute;left:2744px;top:1665px;" width="32" height="27" viewBox="0 0 32 27"><rect x="1" y="1.5" width="29" height="24" rx="4" fill="#0b67da"/><g fill="#fff"><rect x="4.5" y="6" width="4" height="4"/><rect x="10.5" y="6" width="4" height="4"/><rect x="16.5" y="6" width="4" height="4"/><rect x="22.5" y="6" width="4" height="4"/><rect x="4.5" y="12" width="4" height="4"/><rect x="10.5" y="12" width="4" height="4"/><rect x="16.5" y="12" width="4" height="4"/><rect x="22.5" y="12" width="4" height="4"/><rect x="8" y="18.5" width="15" height="3"/></g></svg>
<svg style="position:absolute;left:2791px;top:1663px;" width="33" height="31" viewBox="0 0 33 31"><path d="M9 1.5 Q16.5 9 24 1.5 L31.5 5 L30.5 13 L25 12 V27 Q16.5 31 8 27 V12 L2.5 13 L1.5 5 Z" fill="#0b67da"/></svg>
<svg style="position:absolute;left:2841px;top:1665px;" width="29" height="28" viewBox="0 0 29 28"><defs><linearGradient id="tg" x1="0" y1="0" x2="1" y2="1"><stop offset="0" stop-color="#a56bf0"/><stop offset="0.55" stop-color="#e7709a"/><stop offset="1" stop-color="#ff8a3c"/></linearGradient></defs><rect x="0.5" y="0.5" width="12.5" height="12.5" rx="4.5" fill="#a76df0"/><rect x="15.5" y="0.5" width="12.5" height="12.5" rx="4.5" fill="#d9707f"/><rect x="19.5" y="4.3" width="4.6" height="4.6" fill="#fff"/><rect x="0.5" y="15" width="12.5" height="12.5" rx="4.5" fill="#d873c4"/><rect x="15.5" y="15" width="12.5" height="12.5" rx="4.5" fill="#fd8448"/></svg>
<div class="t " style="left:2653.10px;top:1677.37px;font-size:20px;transform:scaleX(0.8836);color:#8a8a8a;font-family:'Liberation Sans','Noto Sans CJK SC',sans-serif;text-shadow:0 0 1.5px #fff,0 0 1px #fff;">CSDN @</div>
<div class="t" style="left:2727px;top:1679.5px;font-size:18.5px;letter-spacing:1px;color:#8a8a8a;font-family:'Liberation Sans','Noto Sans CJK SC',sans-serif;text-shadow:0 0 1.5px #fff,0 0 1px #fff;line-height:1em">只因为你而温柔</div>
</div></body></html>
